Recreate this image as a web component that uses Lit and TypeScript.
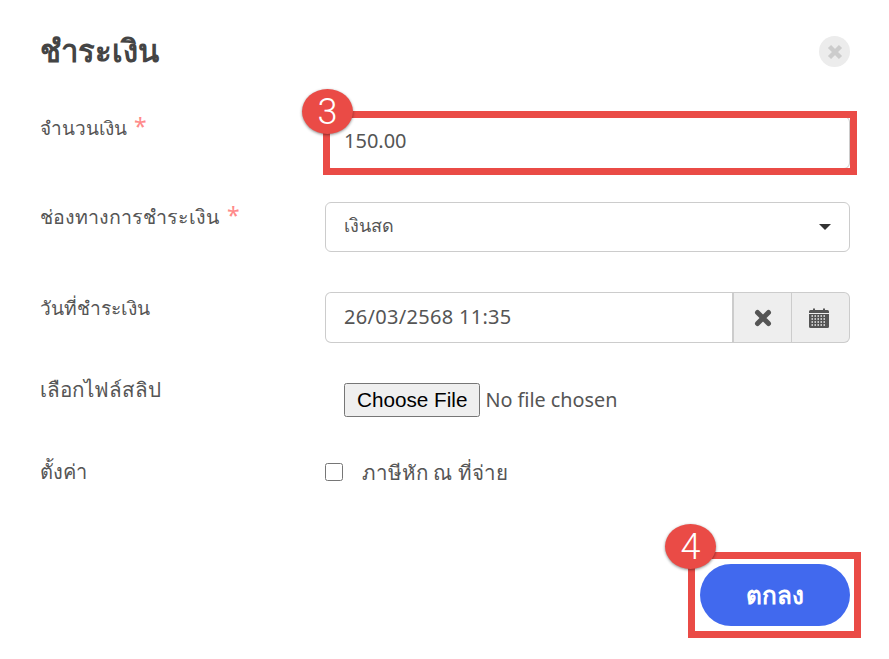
import { LitElement, html, css } from "lit";
import { customElement } from "lit/decorators.js";

@customElement("app-root")
export class AppRoot extends LitElement {
  static styles = css`
    :host {
      display: block;
      position: relative;
      width: 889px;
      height: 659px;
      overflow: hidden;
      background: #fff;
      color: #555;
      font-family: "Noto Sans", "DejaVu Sans", "Liberation Sans", sans-serif;
      font-size: 20px;
    }
    .modal { display: flex; flex-direction: column; padding: 0 39px 0 40px; }
    .head { display: flex; justify-content: space-between; align-items: flex-start; height: 46px; margin-top: 29px; }
    h1 { margin: 0; font-size: 31px; line-height: 42px; font-weight: 700; color: #444; }
    .close { width: 31px; height: 31px; margin-top: 7px; border-radius: 50%; background: #ececec; border: 0; padding: 0; display: flex; align-items: center; justify-content: center; }
    .row { display: grid; grid-template-columns: 285px 525px; align-items: start; }
    .r1 { margin-top: 41px; }
    .r2 { margin-top: 33px; }
    .r3 { margin-top: 40px; }
    .r4 { margin-top: 40px; }
    .r5 { margin-top: 45px; }
    .lab { line-height: 28px; margin-top: -2px; }
    .r1 .lab { font-size: 19px; }
    .r2 .lab { font-size: 19.600px; margin-top: 1px; }
    .r3 .lab { font-size: 19.200px; margin-top: 2px; }
    .r4 .lab { font-size: 20.600px; margin-top: -8px; }
    .r5 .lab { margin-top: -4px; }
    .star { color: #ff8a8a; font-size: 23px; line-height: 20px; margin-left: 2px; }
    .r2 .star { margin-left: 3px; }
    .ctl { box-sizing: border-box; height: 50px; border: 1px solid #ccc; border-radius: 6px; padding: 0 18px; display: flex; align-items: center; background: #fff; }
    .amount { height: 53px; padding-bottom: 5px; }
    .sel { justify-content: space-between; font-size: 18px; padding-bottom: 3px; }
    .caret { width: 0; height: 0; margin-top: 3px; border: 6.500px solid transparent; border-top-color: #333; border-bottom: 0; }
    .date { display: flex; height: 51px; }
    .date .txt { flex: 1; height: 51px; border-radius: 6px 0 0 6px; border-right: 2px solid #ccc; letter-spacing: 0.300px; padding-bottom: 2px; }
    .addon { box-sizing: border-box; height: 51px; width: 58px; background: #eee; border: 1px solid #ccc; border-left: 0; display: flex; align-items: center; justify-content: center; }
    .addon.last { border-radius: 0 6px 6px 0; padding-right: 3px; }
    .file { height: 34px; margin-left: 19px; display: flex; align-items: center; }
    .file input { font: 19.800px "Noto Sans", sans-serif; color: #555; width: 320px; }
    .file input::file-selector-button { font: 20.700px "Liberation Sans", sans-serif; color: #000; padding: 3px 11px; margin-right: 5px; }
    .chk { display: flex; align-items: center; height: 20px; gap: 19px; font-size: 20.500px; }
    .chk input { width: 18px; height: 18px; margin: 0; }
    .foot { display: flex; justify-content: flex-end; margin-top: 78px; }
    .ok { width: 150px; height: 62px; border: 0; border-radius: 31px; background: #4169ee; color: #fff; font: 600 24.300px "Noto Sans", "DejaVu Sans", sans-serif; }
    .mark { position: absolute; box-sizing: border-box; border: 7px solid #ea4b46; }
    .m1 { left: 323px; top: 111px; width: 534px; height: 64px; }
    .m2 { left: 688px; top: 552px; width: 173px; height: 86px; }
    .badge { position: absolute; width: 51px; height: 45px; border-radius: 50%; background: #ea4b46; color: #fff; box-shadow: 0 1px 3px rgba(0,0,0,.45); display: flex; align-items: center; justify-content: center; font: 300 36px Roboto, sans-serif; }
    .b1 { left: 302px; top: 89px; }
    .b2 { left: 665px; top: 524px; }
  `;

  render() {
    return html`
      <div class="modal">
        <div class="head">
          <h1>ชำระเงิน</h1>
          <button class="close" aria-label="close">
            <svg width="16" height="16" viewBox="0 0 16 16"><path d="M2.500 2.500 13.500 13.500M13.500 2.500 2.500 13.500" stroke="#ccc" stroke-width="4.500"/></svg>
          </button>
        </div>
        <div class="row r1"><div class="lab">จำนวนเงิน <span class="star">*</span></div><div class="ctl amount">150.00</div></div>
        <div class="row r2"><div class="lab">ช่องทางการชำระเงิน <span class="star">*</span></div><div class="ctl sel"><span>เงินสด</span><span class="caret"></span></div></div>
        <div class="row r3"><div class="lab">วันที่ชำระเงิน</div>
          <div class="date">
            <div class="ctl txt">26/03/2568 11:35</div>
            <div class="addon">
              <svg width="18" height="18" viewBox="0 0 18 18"><path d="M3.500 3.500 14.500 14.500M14.500 3.500 3.500 14.500" stroke="#555" stroke-width="5" stroke-linecap="round"/></svg>
            </div>
            <div class="addon last">
              <svg width="20" height="21" viewBox="0 0 20 21">
                <path d="M0 4.500Q0 3 1.500 3H4V1.500H6V3H14V1.500H16V3H18.500Q20 3 20 4.500V6H0Z" fill="#555"/>
                <path d="M0 7H20V19.500Q20 21 18.500 21H1.500Q0 21 0 19.500Z" fill="#555"/>
                <path d="M2.500 9H17.500M2.500 12H17.500M2.500 15H17.500M2.500 18H17.500" stroke="#eee" stroke-width="1.400" stroke-dasharray="1.500 1.500"/>
              </svg>
            </div>
          </div>
        </div>
        <div class="row r4"><div class="lab">เลือกไฟล์สลิป</div><div class="file"><input type="file" /></div></div>
        <div class="row r5"><div class="lab">ตั้งค่า</div><label class="chk"><input type="checkbox" /><span>ภาษีหัก ณ ที่จ่าย</span></label></div>
        <div class="foot"><button class="ok">ตกลง</button></div>
      </div>
      <div class="mark m1"></div>
      <div class="mark m2"></div>
      <div class="badge b1">3</div>
      <div class="badge b2">4</div>
    `;
  }
}
